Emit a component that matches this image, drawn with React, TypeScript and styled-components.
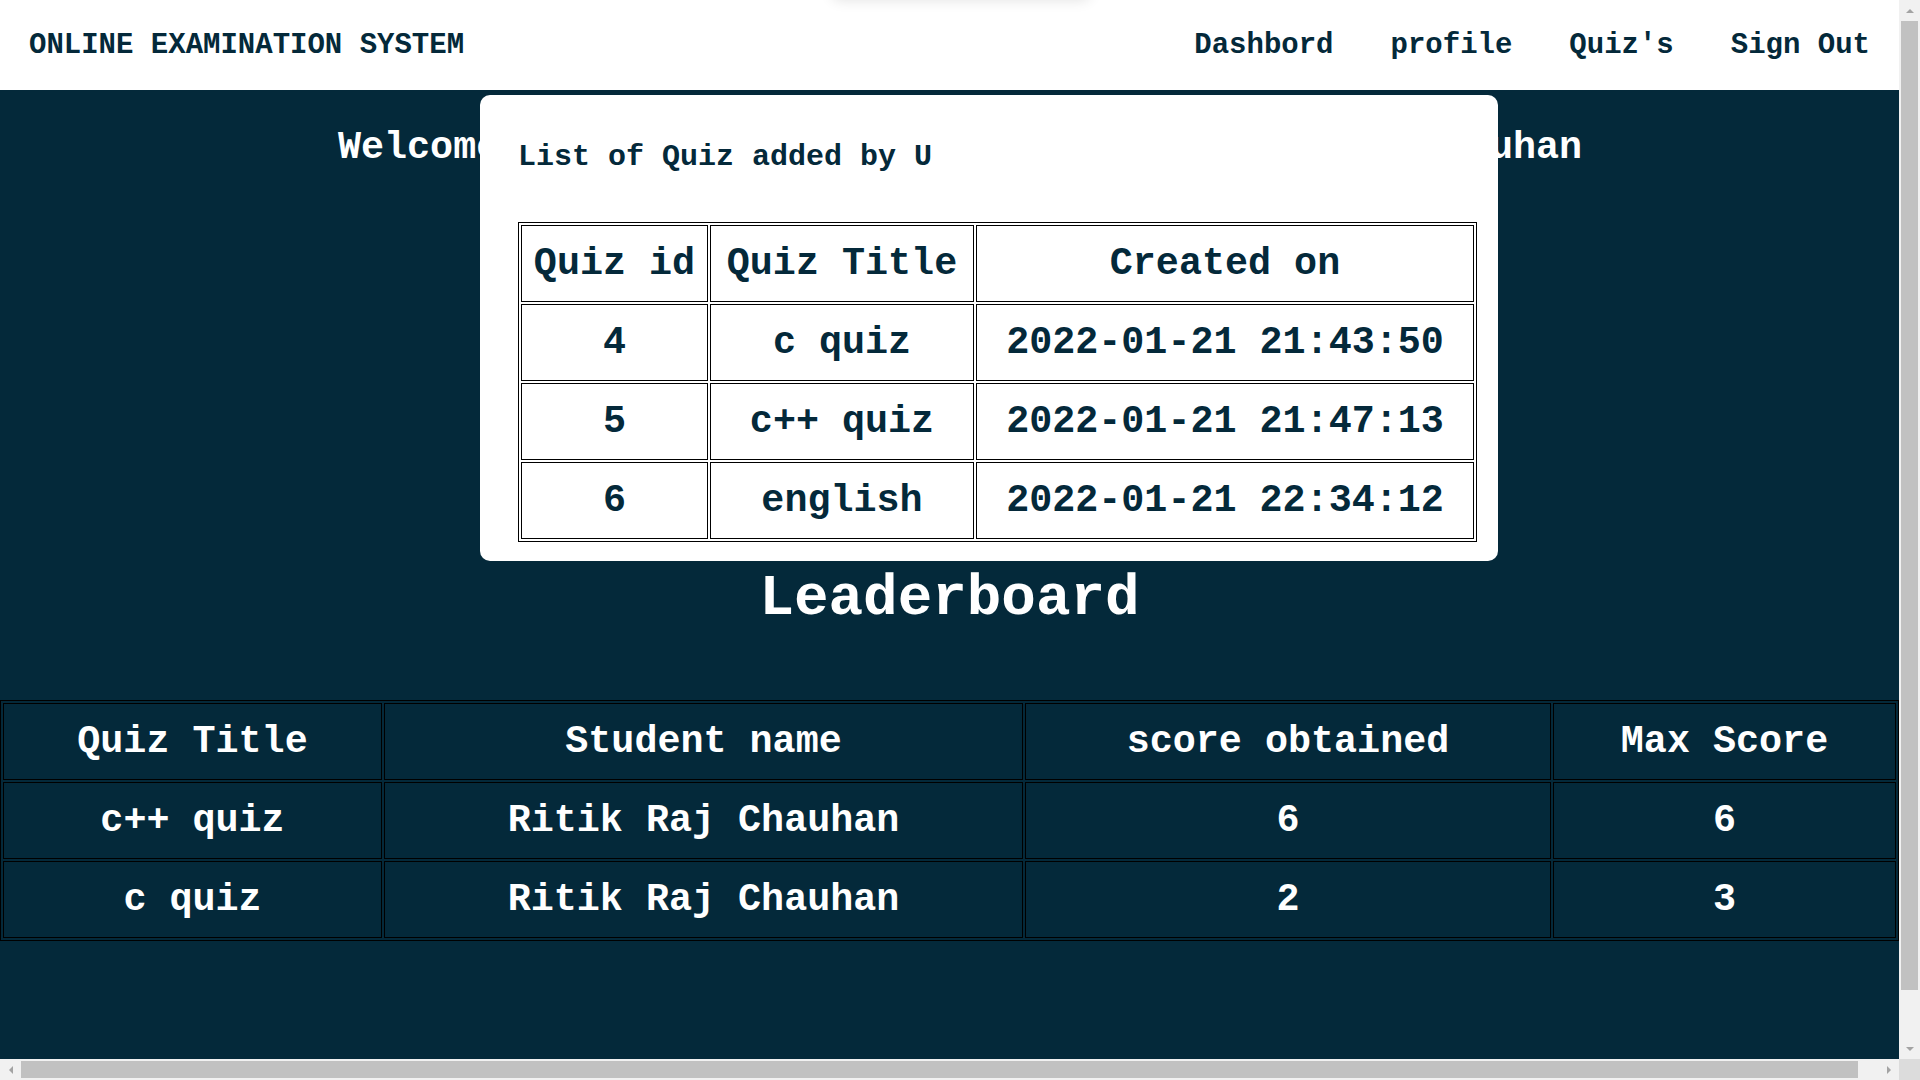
import React from "react";
import styled, { createGlobalStyle, css } from "styled-components";

const NAVY = "#04293A";
const ARROW = "#a3a3a3";
const TRACK = "#f1f1f1";
const THUMB = "#c1c1c1";

const GlobalStyle = createGlobalStyle`
  *, *::before, *::after { box-sizing: border-box; }
  html, body { margin: 0; padding: 0; overflow: hidden; }
  body {
    background: ${NAVY};
    font-family: "Liberation Mono", "Courier New", monospace;
    font-weight: 700;
  }
`;

/* ---------- window frame with scrollbars ---------- */

const Frame = styled.div`
  width: 100vw;
  height: 100vh;
  display: grid;
  grid-template-columns: 1fr 21px;
  grid-template-rows: 1fr 21px;
`;

const Viewport = styled.div`
  position: relative;
  overflow: hidden;
  background: ${NAVY};
`;

const ScrollBar = styled.div<{ $axis: "v" | "h" }>`
  display: flex;
  flex-direction: ${(p) => (p.$axis === "v" ? "column" : "row")};
  background: ${TRACK};
`;

const ScrollButton = styled.div`
  flex: 0 0 21px;
  width: 21px;
  height: 21px;
  display: flex;
  align-items: center;
  justify-content: center;
`;

type Dir = "up" | "down" | "left" | "right";

const Arrow = styled.span<{ $dir: Dir }>`
  width: 0;
  height: 0;
  ${(p) =>
    p.$dir === "up"
      ? css`
          border-left: 4px solid transparent;
          border-right: 4px solid transparent;
          border-bottom: 4px solid ${ARROW};
        `
      : p.$dir === "down"
      ? css`
          border-left: 4px solid transparent;
          border-right: 4px solid transparent;
          border-top: 4px solid ${ARROW};
        `
      : p.$dir === "left"
      ? css`
          border-top: 4px solid transparent;
          border-bottom: 4px solid transparent;
          border-right: 4px solid ${ARROW};
        `
      : css`
          border-top: 4px solid transparent;
          border-bottom: 4px solid transparent;
          border-left: 4px solid ${ARROW};
        `}
`;

const Track = styled.div<{ $axis: "v" | "h" }>`
  flex: 1;
  display: flex;
  flex-direction: ${(p) => (p.$axis === "v" ? "column" : "row")};
  padding: ${(p) => (p.$axis === "v" ? "0 2px" : "2px 0")};
`;

const Thumb = styled.div<{ $size: number }>`
  flex: 0 0 ${(p) => p.$size}%;
  background: ${THUMB};
`;

const Corner = styled.div`
  background: #dcdcdc;
`;

/* ---------- page ---------- */

const Page = styled.div`
  min-height: 1111px;
  padding-bottom: 170px;
`;

const TopShadow = styled.div`
  position: absolute;
  top: -40px;
  left: 832px;
  width: 258px;
  height: 40px;
  background: #fff;
  box-shadow: 0 0 14px rgba(0, 0, 0, 0.12);
  border-radius: 8px;
  z-index: 5;
`;

const NavBar = styled.header`
  height: 90px;
  background: #fff;
  color: ${NAVY};
  display: flex;
  align-items: center;
  justify-content: space-between;
  padding: 0 29px;
  font-size: 29px;
`;

const Brand = styled.div`
  white-space: nowrap;
`;

const NavLinks = styled.nav`
  display: flex;
  gap: 57px;
`;

const NavLink = styled.a`
  color: ${NAVY};
  text-decoration: none;
  white-space: nowrap;
`;

const Welcome = styled.h2`
  width: 100vw;
  margin: 36px 0 0;
  text-align: center;
  color: #fff;
  font-size: 38.4px;
  line-height: 44px;
  white-space: nowrap;
`;

const BoardTitle = styled.h1`
  margin: 396px 0 68px;
  text-align: center;
  color: #fff;
  font-size: 57.6px;
  line-height: 66px;
`;

const Table = styled.table<{ $tone: "light" | "dark"; $width: string }>`
  width: ${(p) => p.$width};
  border: 1px solid #000;
  border-collapse: separate;
  border-spacing: 2px;
  table-layout: fixed;
  color: ${(p) => (p.$tone === "light" ? NAVY : "#fff")};
  font-size: 38.4px;
`;

const HeadCell = styled.th<{ $w: number }>`
  width: ${(p) => p.$w}px;
  height: 77px;
  padding: 0;
  border: 1px solid #000;
  text-align: center;
  line-height: 44px;
  font-weight: 700;
  white-space: nowrap;
`;

const Cell = styled.td`
  height: 77px;
  padding: 0;
  border: 1px solid #000;
  text-align: center;
  line-height: 44px;
  font-weight: 700;
  white-space: nowrap;
`;

const Modal = styled.div`
  position: absolute;
  top: 95px;
  left: 480px;
  width: 1018px;
  height: 466px;
  background: #fff;
  border-radius: 10px;
  padding: 45px 20px 19px 38px;
  color: ${NAVY};
  z-index: 10;
`;

const ModalTitle = styled.div`
  font-size: 30px;
  line-height: 34px;
  margin-bottom: 48px;
  white-space: nowrap;
`;

const quizzes = [
  { id: 4, title: "c quiz", created: "2022-01-21 21:43:50" },
  { id: 5, title: "c++ quiz", created: "2022-01-21 21:47:13" },
  { id: 6, title: "english", created: "2022-01-21 22:34:12" },
];

const scores = [
  { quiz: "c++ quiz", name: "Ritik Raj Chauhan", score: 6, max: 6 },
  { quiz: "c quiz", name: "Ritik Raj Chauhan", score: 2, max: 3 },
];

export default function App() {
  return (
    <>
      <GlobalStyle />
      <Frame>
        <Viewport>
          <Page>
            <TopShadow />
            <NavBar>
              <Brand>ONLINE EXAMINATION SYSTEM</Brand>
              <NavLinks>
                <NavLink href="#">Dashbord</NavLink>
                <NavLink href="#">profile</NavLink>
                <NavLink href="#">Quiz's</NavLink>
                <NavLink href="#">Sign Out</NavLink>
              </NavLinks>
            </NavBar>
            <Welcome>Welcome to Online Examination System Ritik Raj Chauhan</Welcome>
            <BoardTitle>Leaderboard</BoardTitle>
            <Table $tone="dark" $width="100%">
              <thead>
                <tr>
                  <HeadCell $w={379}>Quiz Title</HeadCell>
                  <HeadCell $w={639}>Student name</HeadCell>
                  <HeadCell $w={526}>score obtained</HeadCell>
                  <HeadCell $w={343}>Max Score</HeadCell>
                </tr>
              </thead>
              <tbody>
                {scores.map((s, i) => (
                  <tr key={i}>
                    <Cell>{s.quiz}</Cell>
                    <Cell>{s.name}</Cell>
                    <Cell>{s.score}</Cell>
                    <Cell>{s.max}</Cell>
                  </tr>
                ))}
              </tbody>
            </Table>
            <Modal>
              <ModalTitle>List of Quiz added by U</ModalTitle>
              <Table $tone="light" $width="959px">
                <thead>
                  <tr>
                    <HeadCell $w={187}>Quiz id</HeadCell>
                    <HeadCell $w={264}>Quiz Title</HeadCell>
                    <HeadCell $w={498}>Created on</HeadCell>
                  </tr>
                </thead>
                <tbody>
                  {quizzes.map((q) => (
                    <tr key={q.id}>
                      <Cell>{q.id}</Cell>
                      <Cell>{q.title}</Cell>
                      <Cell>{q.created}</Cell>
                    </tr>
                  ))}
                </tbody>
              </Table>
            </Modal>
          </Page>
        </Viewport>
        <ScrollBar $axis="v">
          <ScrollButton>
            <Arrow $dir="up" />
          </ScrollButton>
          <Track $axis="v">
            <Thumb $size={95.3} />
          </Track>
          <ScrollButton>
            <Arrow $dir="down" />
          </ScrollButton>
        </ScrollBar>
        <ScrollBar $axis="h">
          <ScrollButton>
            <Arrow $dir="left" />
          </ScrollButton>
          <Track $axis="h">
            <Thumb $size={98.9} />
          </Track>
          <ScrollButton>
            <Arrow $dir="right" />
          </ScrollButton>
        </ScrollBar>
        <Corner />
      </Frame>
    </>
  );
}
